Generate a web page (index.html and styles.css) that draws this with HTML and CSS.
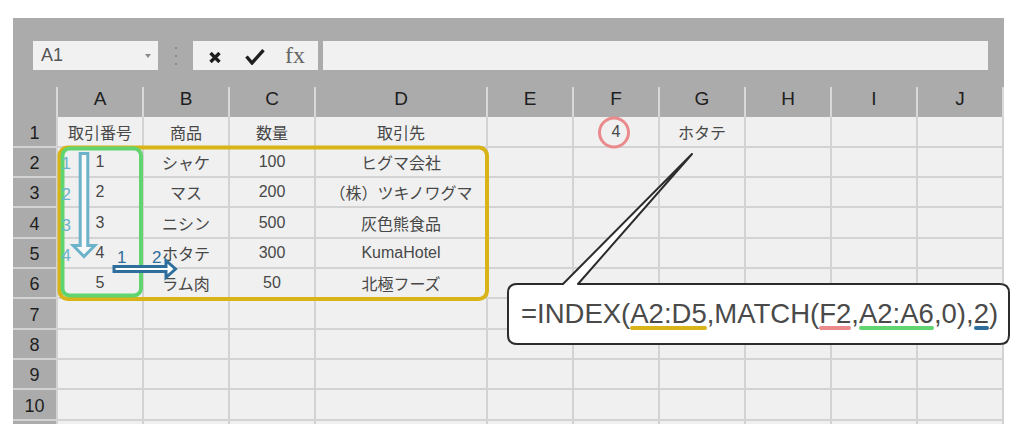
FILE: index.html
```html
<!DOCTYPE html>
<html lang="ja">
<head>
<meta charset="utf-8">
<title>INDEX MATCH</title>
<link rel="stylesheet" href="styles.css">
</head>
<body>
<div class="sheet">
  <div class="toolbar">
    <div class="namebox"><span>A1</span><span class="caret"></span></div>
    <div class="grip"><i></i><i></i><i></i></div>
    <div class="fbuttons">
      <span class="fbtn"><svg class="ico" width="12" height="11" viewBox="0 0 12 11"><path d="M1.5 1 L10.5 10 M10.5 1 L1.5 10" fill="none" stroke="#1e1e1e" stroke-width="3.4"/></svg></span>
      <span class="fbtn"><svg class="ico" width="20" height="16" viewBox="0 0 20 16"><path d="M1.5 7.5 L7 14 L18.5 1.2" fill="none" stroke="#1e1e1e" stroke-width="3.4"/></svg></span>
      <span class="fbtn fx">fx</span>
    </div>
    <div class="finput"></div>
  </div>
  <div class="grid">
    <div class="corner"></div>
    <div class="ch">A</div><div class="ch">B</div><div class="ch">C</div><div class="ch">D</div><div class="ch">E</div><div class="ch">F</div><div class="ch">G</div><div class="ch">H</div><div class="ch">I</div><div class="ch">J</div>

    <div class="rh">1</div>
    <div class="c">取引番号</div><div class="c">商品</div><div class="c">数量</div><div class="c">取引先</div><div class="c"></div><div class="c">4</div><div class="c">ホタテ</div><div class="c"></div><div class="c"></div><div class="c"></div>

    <div class="rh">2</div>
    <div class="c">1</div><div class="c">シャケ</div><div class="c">100</div><div class="c">ヒグマ会社</div><div class="c"></div><div class="c"></div><div class="c"></div><div class="c"></div><div class="c"></div><div class="c"></div>

    <div class="rh">3</div>
    <div class="c">2</div><div class="c">マス</div><div class="c">200</div><div class="c">（株）ツキノワグマ</div><div class="c"></div><div class="c"></div><div class="c"></div><div class="c"></div><div class="c"></div><div class="c"></div>

    <div class="rh">4</div>
    <div class="c">3</div><div class="c">ニシン</div><div class="c">500</div><div class="c">灰色熊食品</div><div class="c"></div><div class="c"></div><div class="c"></div><div class="c"></div><div class="c"></div><div class="c"></div>

    <div class="rh">5</div>
    <div class="c">4</div><div class="c">ホタテ</div><div class="c">300</div><div class="c">KumaHotel</div><div class="c"></div><div class="c"></div><div class="c"></div><div class="c"></div><div class="c"></div><div class="c"></div>

    <div class="rh">6</div>
    <div class="c">5</div><div class="c">ラム肉</div><div class="c">50</div><div class="c">北極フーズ</div><div class="c"></div><div class="c"></div><div class="c"></div><div class="c"></div><div class="c"></div><div class="c"></div>

    <div class="rh">7</div>
    <div class="c"></div><div class="c"></div><div class="c"></div><div class="c"></div><div class="c"></div><div class="c"></div><div class="c"></div><div class="c"></div><div class="c"></div><div class="c"></div>

    <div class="rh">8</div>
    <div class="c"></div><div class="c"></div><div class="c"></div><div class="c"></div><div class="c"></div><div class="c"></div><div class="c"></div><div class="c"></div><div class="c"></div><div class="c"></div>

    <div class="rh">9</div>
    <div class="c"></div><div class="c"></div><div class="c"></div><div class="c"></div><div class="c"></div><div class="c"></div><div class="c"></div><div class="c"></div><div class="c"></div><div class="c"></div>

    <div class="rh">10</div>
    <div class="c"></div><div class="c"></div><div class="c"></div><div class="c"></div><div class="c"></div><div class="c"></div><div class="c"></div><div class="c"></div><div class="c"></div><div class="c"></div>

    <div class="rh"></div>
    <div class="c"></div><div class="c"></div><div class="c"></div><div class="c"></div><div class="c"></div><div class="c"></div><div class="c"></div><div class="c"></div><div class="c"></div><div class="c"></div>
  </div>
</div>

<svg class="marks" width="1024" height="424" viewBox="0 0 1024 424">
  <rect class="m-yellow" x="59.5" y="147.5" width="427.5" height="151.5" rx="8"/>
  <rect class="m-green" x="62.5" y="148.5" width="78.5" height="147" rx="7"/>
  <polygon class="m-arrow-v" points="80.2,153.5 87.8,153.5 87.8,245.5 94.8,245.5 84,256.5 73.2,245.5 80.2,245.5"/>
  <polygon class="m-arrow-h" points="114,266.5 166,266.5 166,260.5 175.5,269 166,277.5 166,271.5 114,271.5"/>
  <circle class="m-circle" cx="614" cy="132.5" r="14.5"/>
  <text class="m-lb" x="61.5" y="169">1</text>
  <text class="m-lb" x="61.5" y="199.5">2</text>
  <text class="m-lb" x="61.5" y="230.5">3</text>
  <text class="m-lb" x="61.5" y="261">4</text>
  <text class="m-db" x="117" y="262.5">1</text>
  <text class="m-db" x="152" y="262.5">2</text>
  <path class="m-callout" d="M517 284 H563 L692 154 L578 284 H1000 Q1009 284 1009 293 V335 Q1009 344 1000 344 H517 Q508 344 508 335 V293 Q508 284 517 284 Z"/>
</svg>

<div class="callout">=INDEX(<span class="u u-yellow">A2:D5</span>,MATCH(<span class="u u-pink">F2</span>,<span class="u u-green">A2:A6</span>,0),<span class="u u-blue">2</span>)</div>
</body>
</html>
```

FILE: styles.css
```css
* { box-sizing: border-box; }

html, body {
  margin: 0;
  padding: 0;
}

body {
  position: relative;
  width: 1024px;
  height: 424px;
  overflow: hidden;
  background: #ffffff;
  font-family: "Liberation Sans", "Noto Sans CJK JP", sans-serif;
}

.sheet {
  margin: 18px 0 0 13px;
  width: 991px;
  background: #ababab;
}

/* ---------- toolbar ---------- */
.toolbar {
  display: flex;
  align-items: center;
  height: 68px;
  padding: 23px 16px 16px 20px;
}

.namebox {
  width: 125px;
  height: 29px;
  background: #f1f1f1;
  display: flex;
  align-items: center;
  justify-content: space-between;
  padding: 0 7px 0 8px;
  font-size: 18px;
  color: #555;
}

.caret {
  width: 0;
  height: 0;
  border-left: 3px solid transparent;
  border-right: 3px solid transparent;
  border-top: 4px solid #8a8a8a;
}

.grip {
  width: 35px;
  height: 29px;
  display: flex;
  flex-direction: column;
  align-items: center;
  justify-content: center;
  gap: 6px;
}

.grip i {
  display: block;
  width: 2px;
  height: 2px;
  background: #8a8a8a;
}

.fbuttons {
  width: 125px;
  height: 29px;
  background: #f1f1f1;
  display: flex;
  align-items: center;
  padding-left: 2px;
}

.fbtn {
  width: 40px;
  height: 29px;
  display: flex;
  align-items: center;
  justify-content: center;
}

.ico { display: block; margin-top: 3px; }

.fx {
  font-family: "Liberation Serif", "DejaVu Serif", serif;
  font-size: 24px;
  line-height: 1;
  color: #666;
  padding-bottom: 2px;
}

.finput {
  flex: 1;
  height: 29px;
  margin-left: 5px;
  background: #f1f1f1;
}

/* ---------- grid ---------- */
.grid {
  display: grid;
  grid-template-columns: 45px 86px 86px 86px 172px repeat(6, 86px);
  grid-template-rows: 31px 31px 30px 30px 31px 30px 30px 31px 30px 30px 31px 30px;
}

.corner {
  border-right: 2px solid #d8d8d8;
  margin-top: 1px;
}

.ch {
  display: flex;
  align-items: center;
  justify-content: center;
  border-right: 2px solid #d8d8d8;
  margin-top: 1px;
  padding-bottom: 6px;
  font-size: 19px;
  color: #1e1e1e;
}

.rh {
  display: flex;
  align-items: center;
  justify-content: center;
  border-right: 2px solid #d3d3d3;
  border-bottom: 2px solid #d3d3d3;
  padding-top: 3px;
  font-size: 18px;
  color: #1e1e1e;
}

.c {
  display: flex;
  align-items: center;
  justify-content: center;
  background: #f0f0f0;
  border-right: 2px solid #d3d3d3;
  border-bottom: 2px solid #d3d3d3;
  font-size: 16px;
  color: #484848;
  white-space: nowrap;
}

/* ---------- annotations ---------- */
.marks {
  position: absolute;
  left: 0;
  top: 0;
}

.m-yellow { fill: none; stroke: #d8b418; stroke-width: 4; }
.m-green { fill: none; stroke: #60d46e; stroke-width: 4; }
.m-arrow-v { fill: #fafafa; stroke: #6cb2cb; stroke-width: 3; }
.m-arrow-h { fill: #ffffff; stroke: #2e6e9c; stroke-width: 3; }
.m-circle { fill: none; stroke: #ea8a8c; stroke-width: 3; }
.m-callout { fill: #ffffff; stroke: #2c2c2c; stroke-width: 2; stroke-linejoin: round; }

.m-lb, .m-db {
  font-family: "Liberation Sans", sans-serif;
  font-size: 17px;
}
.m-lb { fill: #6cb2cb; }
.m-db { fill: #2e6e9c; }

.callout {
  position: absolute;
  left: 508px;
  top: 284px;
  width: 501px;
  height: 60px;
  padding-left: 13px;
  font-family: "Liberation Sans", sans-serif;
  font-size: 27.5px;
  line-height: 60px;
  color: #4a4a4a;
  white-space: nowrap;
}

.u { position: relative; }
.u::after {
  content: "";
  position: absolute;
  left: 0;
  right: 0;
  bottom: -1px;
  height: 4px;
  border-radius: 2px;
}
.u-yellow::after { background: #d8b418; }
.u-pink::after { background: #ea8a8c; }
.u-green::after { background: #60d46e; }
.u-blue::after { background: #2e6e9c; }
```
